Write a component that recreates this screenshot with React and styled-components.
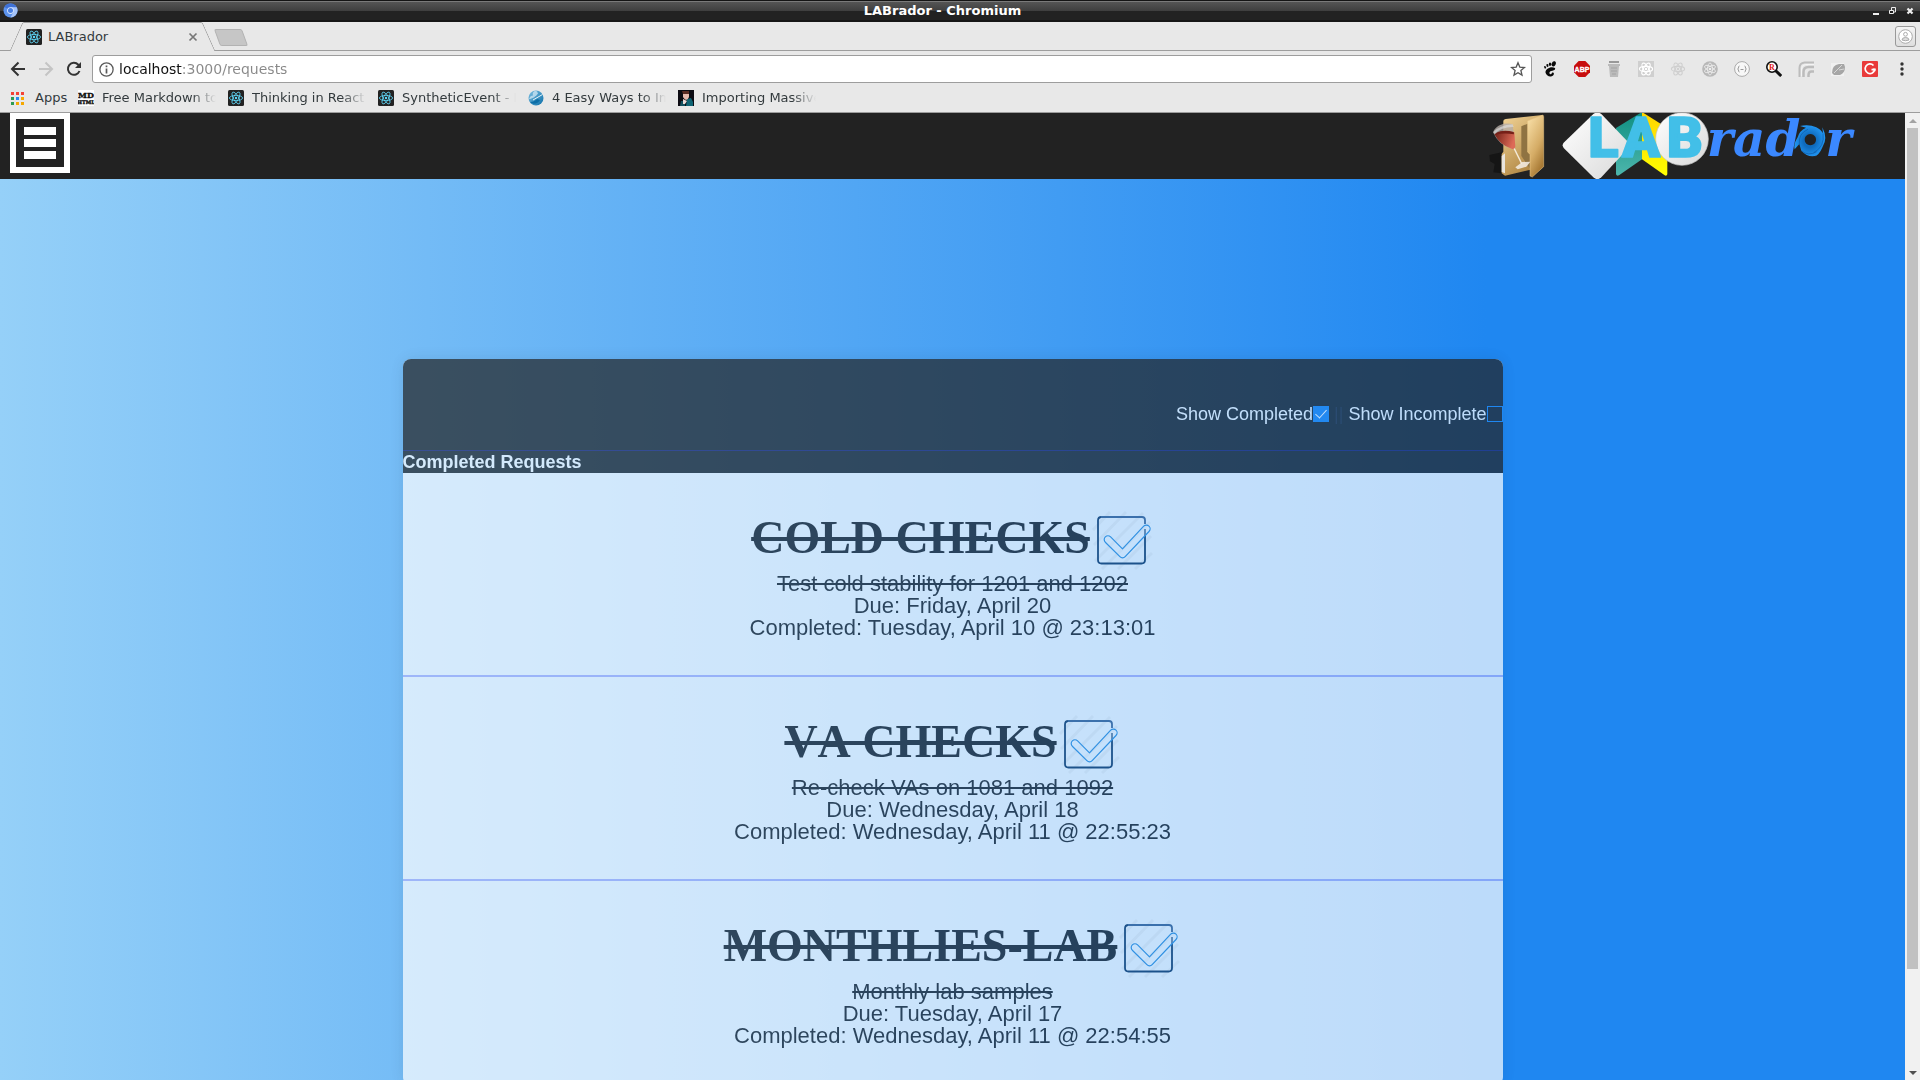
import React, { useState } from "react";
import styled, { createGlobalStyle, css } from "styled-components";

const GlobalStyle = createGlobalStyle`
  * { box-sizing: border-box; }
  body { margin: 0; overflow: hidden; }
  button { padding: 0; border: 0; background: none; font: inherit; color: inherit; cursor: pointer; }
  svg { display: block; flex: none; }
`;

const chromeFont = css`font-family: "DejaVu Sans", Verdana, sans-serif;`;
const pageFont = css`font-family: "Liberation Sans", Arial, sans-serif;`;

/* ---------- browser window ---------- */

const Window = styled.div`
  ${chromeFont}
  height: 100vh;
  display: flex;
  flex-direction: column;
  background: #e8e8e8;
  color: #333a3d;
  font-size: 13px;
`;

const TitleBar = styled.header`
  display: flex;
  align-items: center;
  height: 22px;
  flex: none;
  padding: 0 2px 0 3px;
  border-top: 1px solid #141414;
  border-bottom: 2px solid #161616;
  background: linear-gradient(#7a7a7a 0 1px, #555 1px, #3e3e3e 10px, #222 10px);
  color: #fff;
`;

const WindowTitle = styled.div`
  flex: 1;
  text-align: center;
  font-weight: bold;
  line-height: 18px;
`;

const WindowButton = styled.button`
  width: 17px;
  height: 18px;
  display: grid;
  place-items: center;
`;

const TabStrip = styled.div`
  display: flex;
  align-items: flex-start;
  height: 29px;
  flex: none;
  padding: 0 4px 0 16px;
  box-shadow: inset 0 -1px #9d9d9d;
`;

const Tab = styled.div`
  position: relative;
  z-index: 0;
  width: 193px;
  height: 29px;
  display: flex;
  align-items: center;
  gap: 6px;
  padding: 0 8px 0 10px;
  &::before,
  &::after {
    content: "";
    position: absolute;
    z-index: -1;
    top: 0;
    bottom: 0;
    background: #e8e8e8;
    border-top: 1px solid #9d9d9d;
  }
  &::before {
    left: 0;
    right: 50%;
    border-left: 1px solid #9d9d9d;
    border-top-left-radius: 2px;
    transform: skewX(-24deg);
  }
  &::after {
    right: 0;
    left: 40%;
    border-right: 1px solid #9d9d9d;
    border-top-right-radius: 2px;
    transform: skewX(24deg);
  }
`;

const TabName = styled.span`
  flex: 1;
  line-height: 16px;
`;

const NewTab = styled.button`
  width: 28px;
  height: 17px;
  margin: 7px 0 0 8px;
  background: #c6c6c6;
  border: 1px solid #b2b2b2;
  border-radius: 2px;
  transform: skewX(20deg);
`;

const Profile = styled.button`
  width: 21px;
  height: 21px;
  margin: 4px 0 0 auto;
  display: grid;
  place-items: center;
  border: 1px solid #999;
  border-radius: 3px;
  background: linear-gradient(#f4f4f4, #dedede);
`;

const Toolbar = styled.div`
  display: flex;
  align-items: center;
  flex: none;
  height: 36px;
  padding: 0 2px 0 4px;
`;

const NavButton = styled.button`
  width: 28px;
  height: 28px;
  display: grid;
  place-items: center;
`;

const AddressBar = styled.label`
  flex: 1;
  display: flex;
  align-items: center;
  gap: 5px;
  height: 28px;
  margin: 0 2px 0 4px;
  padding: 0 5px 0 6px;
  border: 1px solid #9d9d9d;
  border-radius: 3px;
  background: #fff;
`;

const Address = styled.input`
  flex: 1;
  min-width: 0;
  height: 24px;
  padding: 0;
  border: 0;
  outline: 0;
  ${chromeFont}
  font-size: 14px;
  color: #888;
  background: linear-gradient(to right, #111 64px, #888 64px);
  -webkit-background-clip: text;
  background-clip: text;
  -webkit-text-fill-color: transparent;
`;

const ExtensionButton = styled.button`
  width: 32px;
  height: 28px;
  display: grid;
  place-items: center;
`;

const BookmarkBar = styled.nav`
  display: flex;
  align-items: center;
  gap: 12px;
  height: 26px;
  flex: none;
  padding: 0 10px 3px 10px;
  border-bottom: 1px solid #9d9d9d;
`;

const Bookmark = styled.a`
  display: flex;
  align-items: center;
  gap: ${(p) => (p.$apps ? "10px" : "8px")};
  width: ${(p) => (p.$apps ? "56px" : "138px")};
  color: inherit;
  text-decoration: none;
`;

const BookmarkName = styled.span`
  flex: 1;
  white-space: nowrap;
  line-height: 18px;
  ${(p) =>
    p.$fade &&
    css`
      overflow: hidden;
      mask-image: linear-gradient(to right, #000 calc(100% - 24px), transparent);
    `}
`;

const Viewport = styled.div`
  flex: 1;
  min-height: 0;
  display: flex;
`;

const ScrollTrack = styled.div`
  width: 15px;
  flex: none;
  display: flex;
  flex-direction: column;
  align-items: center;
  background: #f1f1f1;
`;

const ScrollArrow = styled.button`
  width: 15px;
  height: 15px;
  display: grid;
  place-items: center;
`;

const ScrollSpace = styled.div`
  flex: 1;
  width: 11px;
  display: grid;
  grid-template-rows: 35fr 4fr;
`;

const ScrollThumb = styled.div`
  background: #c1c1c1;
`;

/* ---------- page ---------- */

const Page = styled.div`
  ${pageFont}
  flex: 1;
  min-width: 0;
  overflow: hidden;
  background: linear-gradient(to right, #95d0f8 0%, #1f87f1 78%);
`;

const SiteBar = styled.header`
  display: flex;
  align-items: flex-start;
  height: 66px;
  padding: 0 50px 0 10px;
  background: #222;
`;

const MenuButton = styled.button`
  width: 60px;
  height: 60px;
  display: flex;
  flex-direction: column;
  align-items: center;
  justify-content: center;
  gap: 4px;
  border: 6px solid #fff;
`;

const MenuBar = styled.span`
  width: 32px;
  height: 8px;
  background: #fff;
`;

const Brand = styled.a`
  display: flex;
  gap: 13px;
  margin-left: auto;
`;

const Card = styled.main`
  max-width: 1100px;
  margin: 180px auto 0;
  border-radius: 8px;
  overflow: hidden;
  opacity: 0.7;
  background: #fff;
  color: #1c1c1e;
  box-shadow: 0 0 16px rgba(0, 0, 0, 0.12);
`;

const Filters = styled.div`
  display: flex;
  justify-content: flex-end;
  gap: 5px;
  padding: 44px 0 25px;
  background: #222;
  color: #fff;
  font-size: 18px;
  line-height: 22px;
`;

const FilterLabel = styled.label`
  display: flex;
  align-items: center;
`;

const Separator = styled.span`
  color: #2b303c;
`;

const CheckBox = styled.input`
  appearance: none;
  width: 16px;
  height: 16px;
  margin: 0;
  display: grid;
  place-items: center;
  border: 1px solid #1f87f1;
  &:checked {
    background: #1f87f1;
  }
  &:checked::after {
    content: "";
    width: 5px;
    height: 10px;
    margin-bottom: 3px;
    border: solid #fff;
    border-width: 0 1px 1px 0;
    transform: rotate(42deg);
  }
`;

const SectionTitle = styled.h2`
  margin: 0;
  border-top: 1px solid #21226c;
  background: #222;
  color: #fff;
  font-size: 18px;
  line-height: 22px;
`;

const List = styled.ul`
  margin: 0;
  padding: 0;
  list-style: none;
`;

const Item = styled.li`
  padding: 35px 0 36px;
  border-bottom: 2px solid #b0b4fb;
  text-align: center;
  font-size: 22px;
  line-height: 22px;
`;

const ItemHead = styled.div`
  display: flex;
  align-items: center;
  justify-content: center;
  padding-bottom: 1px;
`;

const ItemTitle = styled.h3`
  margin: 0;
  padding-bottom: 4px;
  font-family: "Liberation Serif", "Times New Roman", serif;
  font-size: 46px;
  line-height: 46px;
  font-kerning: none;
  text-transform: uppercase;
  text-decoration: line-through;
`;

const Line = styled.p`
  margin: 0;
  ${(p) => p.$done && css`text-decoration: line-through;`}
`;

/* ---------- drawings ---------- */

const Atom = ({ color = "#61dafb", bg, size = 16, width = 0.8 }) => (
  <svg width={size} height={size} viewBox="0 0 16 16" fill="none" stroke={color} strokeWidth={width}>
    {bg && <rect width="16" height="16" rx={bg === "#222" ? 1.5 : 0} fill={bg} stroke="none" />}
    <ellipse cx="8" cy="8" rx="6.6" ry="2.6" />
    <ellipse cx="8" cy="8" rx="6.6" ry="2.6" transform="rotate(60 8 8)" />
    <ellipse cx="8" cy="8" rx="6.6" ry="2.6" transform="rotate(120 8 8)" />
    <circle cx="8" cy="8" r="1.2" fill={color} stroke="none" />
  </svg>
);

const ChromiumLogo = () => (
  <svg width="15" height="15" viewBox="0 0 16 16">
    <circle cx="8" cy="8" r="7.5" fill="#5c93ee" />
    <path d="M8 8 1.5 4.2A7.5 7.5 0 0 1 14.5 4.4L8 4.5Z" fill="#3f72d8" />
    <path d="M8 15.5A7.5 7.5 0 0 0 14.6 4.5H8L11.2 9.7Z" fill="#a6c4fa" />
    <circle cx="8" cy="8" r="3.6" fill="#dbe7fd" />
    <circle cx="8" cy="8" r="2.7" fill="#4a80e4" />
  </svg>
);

const MdIcon = () => (
  <svg width="16" height="16" viewBox="0 0 16 16">
    <rect width="16" height="16" fill="#fff" />
    <g fontFamily="DejaVu Serif" fontWeight="bold" textAnchor="middle" fill="#111" stroke="#111" strokeWidth=".4">
      <text x="8" y="8" fontSize="8">MD</text>
      <text x="8" y="14" fontSize="5">HTML</text>
    </g>
  </svg>
);

const AppsIcon = () => (
  <svg width="15" height="15" viewBox="0 0 15 15">
    {["#f44336", "#f44336", "#f44336", "#2e9b51", "#2a8cf0", "#f5a800", "#2e9b51", "#f5a800", "#f5a800"].map((c, i) => (
      <rect key={i} x={1 + (i % 3) * 5} y={1 + Math.floor(i / 3) * 5} width="3" height="3" fill={c} />
    ))}
  </svg>
);

const GlobeIcon = () => (
  <svg width="16" height="16" viewBox="0 0 16 16">
    <defs>
      <linearGradient id="globe" x2="1" y2="1">
        <stop stopColor="#7dbfe2" />
        <stop offset="1" stopColor="#0a6ea8" />
      </linearGradient>
    </defs>
    <circle cx="8" cy="8" r="7.5" fill="url(#globe)" />
    <path d="M1 9C4 9 8 6.500 10 3.500L9 1.500C6 0 4 3 5 5.500C3 5.500 2 6.500 1 9Z" fill="#c9e4f2" opacity=".8" />
    <path d="M5 10 14.500 4.500" stroke="#e6f4fa" />
    <path d="M2 12c3 0 5-1 7-3l3 1c-2 4-7 5-10 2Z" fill="#0c6da6" />
  </svg>
);

const PortraitIcon = () => (
  <svg width="16" height="16" viewBox="0 0 16 16">
    <rect width="16" height="16" fill="#0c0b12" />
    <path d="M8 16 9 9l4-1 2 4v4Z" fill="#0f6474" />
    <path d="M2 16 3 11l4 0 0 5Z" fill="#124f5e" />
    <path d="M5 3q3-3 6 0v4q-1 3-3 3-2-1-3-3Z" fill="#e6b9ad" />
    <path d="M4 1h7v3H5Z" fill="#5b2d25" />
    <path d="M5 9l4 2-2 3-2 0Z" fill="#eadbd8" />
  </svg>
);

const BackIcon = ({ color, flip }) => (
  <svg width="16" height="16" viewBox="0 0 16 16" fill="none" stroke={color} strokeWidth="2" transform={flip ? "scale(-1 1)" : undefined}>
    <path d="M15 8H2.500M8.500 1.500 2 8l6.500 6.500" />
  </svg>
);

const ReloadIcon = () => (
  <svg width="16" height="16" viewBox="0 0 16 16">
    <path d="M13.500 10A6 6 0 1 1 12.300 3.700L14 5.500" fill="none" stroke="#333" strokeWidth="2" />
    <path d="M15 1v6H9Z" fill="#333" />
  </svg>
);

const InfoIcon = () => (
  <svg width="15" height="15" viewBox="0 0 15 15">
    <circle cx="7.500" cy="7.500" r="6.600" fill="none" stroke="#5a5a5a" strokeWidth="1.300" />
    <path d="M7.500 6.500v5M7.500 3.500v1.700" stroke="#5a5a5a" strokeWidth="1.700" />
  </svg>
);

const StarIcon = () => (
  <svg width="16" height="16" viewBox="0 0 16 16">
    <path d="m8 1.800 1.800 4.300 4.700.4-3.600 3 1.100 4.600L8 11.700l-4 2.400 1.100-4.600-3.600-3 4.700-.4Z" fill="none" stroke="#555" strokeWidth="1.300" />
  </svg>
);

const ext = {
  "GNOME Shell": (
    <svg width="16" height="16" viewBox="0 0 16 16" fill="#0a0a0a">
      <ellipse cx="11.700" cy="2.800" rx="2" ry="2.700" transform="rotate(25 11.700 2.800)" />
      <ellipse cx="8" cy="3.300" rx="1.200" ry="1.700" />
      <ellipse cx="5.300" cy="4.500" rx="1" ry="1.500" transform="rotate(-15 5 4)" />
      <ellipse cx="3" cy="6.300" rx=".9" ry="1.300" transform="rotate(-25 3 6)" />
      <path d="M13 7C9 4.500 3 8 3.500 11.500 4 15 9 17 11.500 14c1-1.500 0-3-1.200-2.500-.8.500-.5 2-1.800 1.700-2-.6-1-2.700.7-3.200C11 9.500 14 9 13 7Z" />
    </svg>
  ),
  "Adblock Plus": (
    <svg width="16" height="16" viewBox="0 0 16 16">
      <path d="M4.700 0h6.600L16 4.700v6.600L11.300 16H4.700L0 11.300V4.700Z" fill="#c70d0d" />
      <text x="8" y="10.700" textAnchor="middle" fontFamily="Liberation Sans" fontWeight="bold" fontSize="7" fill="#fff" stroke="#fff" strokeWidth=".3">ABP</text>
    </svg>
  ),
  "HTML cleaner": (
    <svg width="16" height="16" viewBox="0 0 16 16">
      <path d="M3 0h10v2H3Z" fill="#999" />
      <path d="M2 3h12v2h-1l-1 11H4L3 5H2Z" fill="#bbb" />
      <path d="M5 7h6M5 10h6M6 13h4" stroke="#a3a3a3" />
    </svg>
  ),
  "React detector": <Atom color="#fff" bg="#cfcfcf" width={1.2} />,
  "React tools": <Atom color="#cfcfcf" width={1.1} />,
  "Redux tools": (
    <svg width="16" height="16" viewBox="0 0 16 16">
      <circle cx="8" cy="8" r="7.800" fill="#b8b8b8" />
      <g fill="none" stroke="#eee" strokeWidth=".8">
        <ellipse cx="8" cy="8" rx="6" ry="2.500" transform="rotate(90 8 8)" />
        <ellipse cx="8" cy="8" rx="6" ry="2.500" transform="rotate(30 8 8)" />
        <ellipse cx="8" cy="8" rx="6" ry="2.500" transform="rotate(150 8 8)" />
      </g>
      <circle cx="8" cy="8" r="1.300" fill="#eee" />
    </svg>
  ),
  "JSON viewer": (
    <svg width="16" height="16" viewBox="0 0 16 16">
      <circle cx="8" cy="8" r="7.400" fill="#f7f7f7" stroke="#aaa" />
      <path d="M5.500 5Q4.300 5 4.500 7L3.700 8l.8 1q-.2 2 1 2M10.500 5q1.200 0 1 2l.8 1-.8 1q.2 2-1 2M6.500 8.500h3" fill="none" stroke="#999" />
    </svg>
  ),
  "Regex search": (
    <svg width="16" height="16" viewBox="0 0 16 16">
      <circle cx="6" cy="6" r="5.200" fill="#fff" stroke="#111" strokeWidth="1.600" />
      <path d="m9.500 9.500 5.700 5.500" stroke="#111" strokeWidth="3" />
      <text x="6" y="8.800" textAnchor="middle" fontFamily="Liberation Serif" fontWeight="bold" fontSize="8" fill="#e01818">R</text>
    </svg>
  ),
  "RSS reader": (
    <svg width="16" height="16" viewBox="0 0 16 16" fill="none">
      <path d="M1.500 16V7q0-5 5-5.500H16" stroke="#bcbcbc" strokeWidth="2" />
      <path d="M5.500 16V11q0-5 5-5H16" stroke="#bcbcbc" strokeWidth="2.500" />
      <path d="M10.500 16v-2q0-3.500 3-3.500H16" stroke="#bcbcbc" strokeWidth="2.500" />
      <path d="M3.500 15V8q0-4 4-4.500H16" stroke="#f4f4f4" />
    </svg>
  ),
  "Page speed": (
    <svg width="16" height="16" viewBox="0 0 16 16">
      <path d="M1 2h13v13H1Z" fill="#f1f1f1" />
      <path d="M2 12Q2 4 9 3h5l1 3q0 6-5 8H4Z" fill="#a6a6a6" />
      <path d="M4 12 12 4M9 9l5-1" stroke="#d8d8d8" />
    </svg>
  ),
  Grammarly: (
    <svg width="16" height="16" viewBox="0 0 16 16">
      <rect width="16" height="16" rx="1" fill="#e93a3a" />
      <path d="M11.500 4.500A4.800 4.800 0 1 0 12.700 8.600H9.500" fill="none" stroke="#fff" strokeWidth="1.700" />
      <path d="M10.500 7.500h3v3Z" fill="#fff" />
    </svg>
  ),
};

const MoreIcon = () => (
  <svg width="4" height="14" viewBox="0 0 4 14" fill="#333">
    <circle cx="2" cy="2" r="1.700" /><circle cx="2" cy="7" r="1.700" /><circle cx="2" cy="12" r="1.700" />
  </svg>
);

const DoneIcon = () => (
  <svg width="64" height="64" viewBox="0 0 64 64" fill="none">
    <g stroke="#222" strokeOpacity=".05" strokeWidth="3">
      <path d="M3 22 20 4M4 37 36 4M5 53 53 5M12 61 60 14M28 61 61 28M45 61 62 45" />
    </g>
    <path d="M55 21V52q0 3.500-3.500 3.500H11.500Q8 55.500 8 52V12.500Q8 9 11.500 9" stroke="#0f3560" strokeWidth="1.800" />
    <path d="M11 9H52q3 0 3 3v4" stroke="#3b608f" strokeWidth="1.800" />
    <path d="M15.300 34.200a3.700 3.700 0 0 1 5.300-5.300L32.500 40.800 53.700 18.200a3.700 3.700 0 0 1 5.300 5.300L35.200 48.700a3.700 3.700 0 0 1-5.300 0Z" fill="#fff" fillOpacity=".35" stroke="#2d8fdd" strokeWidth="1.200" strokeLinejoin="round" />
  </svg>
);

const WineFolder = () => (
  <svg width="60" height="66" viewBox="21 339 180 198" aria-hidden="true">
    <defs>
      <linearGradient id="fold" x2="0.6" y2="1">
        <stop stopColor="#f3d598" />
        <stop offset="1" stopColor="#ae8440" />
      </linearGradient>
      <linearGradient id="flap" x2="0.5" y2="1">
        <stop stopColor="#fbe3ac" />
        <stop offset=".65" stopColor="#d5ac66" />
        <stop offset="1" stopColor="#a97b36" />
      </linearGradient>
      <linearGradient id="wine" x2="1" y2="0.3">
        <stop stopColor="#6d1d14" />
        <stop offset="1" stopColor="#dd6a57" />
      </linearGradient>
    </defs>
    <path d="M28 465 65 457V520L40 517 44 492 30 484Z" fill="#151515" />
    <path d="M70 363Q70 358 77 357L187 345 189 350V500L75 527 65 520V462L70 455Z" fill="url(#fold)" />
    <path d="M124 379 143 371V458L150 463V506L124 468Z" fill="#8f7342" />
    <path d="M143 363 189 345 191 350V500L157 531 150 528V463L143 456Z" fill="url(#flap)" stroke="#ecc988" strokeWidth="1.500" />
    <path d="M65 468 75 460V520L65 516Z" fill="#e8e4dd" />
    <path d="M101 442 125 491" stroke="#f4ead9" strokeWidth="4" />
    <path d="M106 502 127 486 151 485 139 500 113 508Z" fill="#f4efe6" opacity=".85" />
    <path d="M39 397C50 373 76 367 98 373L106 441Q102 449 95 446Q57 437 39 397Z" fill="#b5aca6" opacity=".8" />
    <path d="M43 402Q65 389 103 397L106 441Q102 449 95 446Q60 436 43 402Z" fill="url(#wine)" />
    <path d="M49 398Q70 388 101 396L102 403Q72 397 47 404Z" fill="#762018" />
    <path d="M40 396Q58 376 98 373L101 381Q65 380 44 402Z" fill="#ddd" opacity=".65" />
  </svg>
);

const LabradorLogo = () => (
  <svg width="295" height="66" viewBox="240 339 885 198" role="img" aria-label="LABrador">
    <defs>
      <linearGradient id="paper" y2="1" x2="1">
        <stop stopColor="#fff" />
        <stop offset="1" stopColor="#d9d9d9" />
      </linearGradient>
      <linearGradient id="teal" x2="0" y2="1">
        <stop stopColor="#0f8f81" />
        <stop offset="1" stopColor="#4db6ac" />
      </linearGradient>
      <linearGradient id="yellow" x2="0" y2="1">
        <stop stopColor="#ffd400" />
        <stop offset="1" stopColor="#ffff00" />
      </linearGradient>
      <radialGradient id="swirl">
        <stop offset=".4" stopColor="#0f6bbd" />
        <stop offset="1" stopColor="#2196f3" />
      </radialGradient>
    </defs>
    <path d="M486 336 408 384V523Q410 529 417 526L486 478Z" fill="url(#teal)" />
    <path d="M486 336 562 384V523Q560 529 554 526L486 478Z" fill="url(#yellow)" />
    <path d="M340 342Q352 333 364 342L442 424Q450 436 442 448L364 532Q352 543 340 532L251 444Q245 436 251 428Z" fill="url(#paper)" />
    <circle cx="606" cy="417" r="79" fill="url(#paper)" stroke="#c4c4c4" strokeWidth="2" />
    <g fill="#42bfe8" stroke="#42bfe8" strokeWidth="5" strokeLinejoin="round" fontFamily="Roboto, sans-serif" fontWeight="900" fontSize="168">
      <text y="471"><tspan x="325">L</tspan><tspan x="426">A</tspan><tspan x="560">B</tspan></text>
    </g>
    <g fill="#3b88ff" fontFamily="DejaVu Serif, serif" fontWeight="bold" fontStyle="italic" fontSize="150">
      <text y="467"><tspan x="680">rad</tspan><tspan x="1036">r</tspan></text>
    </g>
    <path fillRule="evenodd" d="M960 378C985 371 1018 378 1029 400L1027 382Q1044 415 1028 440Q1018 465 1001 471L1012 466Q985 475 964 452L958 432 944 448Q940 432 953 412Q958 392 978 383ZM991 402a17 17 0 1 0 .1 0Z" fill="url(#swirl)" />
    <path d="M958 432Q955 400 984 388M1029 400Q1035 440 1001 458M964 452Q985 470 1010 455" fill="none" stroke="#0e5da8" strokeWidth="3" opacity=".7" />
  </svg>
);

/* ---------- data ---------- */

const bookmarks = [
  { name: "Free Markdown to HTML", icon: <MdIcon /> },
  { name: "Thinking in React -", icon: <Atom bg="#222" /> },
  { name: "SyntheticEvent - React", icon: <Atom bg="#222" /> },
  { name: "4 Easy Ways to Improve", icon: <GlobeIcon /> },
  { name: "Importing Massive", icon: <PortraitIcon /> },
];

const requests = [
  { title: "Cold Checks", text: "Test cold stability for 1201 and 1202", due: "Friday, April 20", completed: "Tuesday, April 10 @ 23:13:01" },
  { title: "VA Checks", text: "Re-check VAs on 1081 and 1092", due: "Wednesday, April 18", completed: "Wednesday, April 11 @ 22:55:23" },
  { title: "Monthlies-Lab", text: "Monthly lab samples", due: "Tuesday, April 17", completed: "Wednesday, April 11 @ 22:54:55" },
];

function Filter({ label, checked, onChange }) {
  return (
    <FilterLabel>
      {label}
      <CheckBox type="checkbox" checked={checked} onChange={(e) => onChange(e.target.checked)} />
    </FilterLabel>
  );
}

function Request({ title, text, due, completed }) {
  return (
    <Item>
      <ItemHead>
        <ItemTitle>{title}</ItemTitle>
        <DoneIcon />
      </ItemHead>
      <Line $done>{text}</Line>
      <Line>Due: {due}</Line>
      <Line>Completed: {completed}</Line>
    </Item>
  );
}

export default function App() {
  const [showCompleted, setShowCompleted] = useState(true);
  const [showIncomplete, setShowIncomplete] = useState(false);
  const [url, setUrl] = useState("localhost:3000/requests");

  return (
    <Window>
      <GlobalStyle />
      <TitleBar>
        <ChromiumLogo />
        <WindowTitle>LABrador - Chromium</WindowTitle>
        <WindowButton aria-label="Minimize">
          <svg width="8" height="8" viewBox="0 0 8 8"><path d="M1 6h6v2H1Z" fill="#eee" /></svg>
        </WindowButton>
        <WindowButton aria-label="Restore">
          <svg width="8" height="8" viewBox="0 0 8 8" fill="none" stroke="#eee"><path d="M.5 3.500h4v3h-4ZM2.500 3V.5h4V5H5" /></svg>
        </WindowButton>
        <WindowButton aria-label="Close">
          <svg width="8" height="8" viewBox="0 0 8 8"><path d="m1.500 1.500 5 5m0-5-5 5" stroke="#eee" strokeWidth="2.200" /></svg>
        </WindowButton>
      </TitleBar>

      <TabStrip>
        <Tab>
          <Atom bg="#222" />
          <TabName>LABrador</TabName>
          <button aria-label="Close tab">
            <svg width="16" height="16" viewBox="0 0 16 16"><path d="m4.500 4.500 7 7m0-7-7 7" stroke="#777" strokeWidth="1.700" /></svg>
          </button>
        </Tab>
        <NewTab aria-label="New tab" />
        <Profile aria-label="Profile">
          <svg width="15" height="15" viewBox="0 0 15 15" fill="#fff" stroke="#aaa">
            <circle cx="7.500" cy="7.500" r="6.800" />
            <circle cx="7.500" cy="5.300" r="1.900" />
            <path d="M4 11q0-2.500 3.500-2.500T11 11Q7.500 12.500 4 11Z" fill="#ddd" />
          </svg>
        </Profile>
      </TabStrip>

      <Toolbar>
        <NavButton aria-label="Back"><BackIcon color="#333" /></NavButton>
        <NavButton aria-label="Forward"><BackIcon color="#c4c4c4" flip /></NavButton>
        <NavButton aria-label="Reload"><ReloadIcon /></NavButton>
        <AddressBar>
          <InfoIcon />
          <Address aria-label="Address" value={url} onChange={(e) => setUrl(e.target.value)} />
          <StarIcon />
        </AddressBar>
        {Object.entries(ext).map(([name, icon]) => (
          <ExtensionButton key={name} aria-label={name}>{icon}</ExtensionButton>
        ))}
        <ExtensionButton aria-label="More"><MoreIcon /></ExtensionButton>
      </Toolbar>

      <BookmarkBar>
        <Bookmark href="#apps" $apps><AppsIcon /><BookmarkName>Apps</BookmarkName></Bookmark>
        {bookmarks.map((b) => (
          <Bookmark key={b.name} href="#bookmark">
            {b.icon}
            <BookmarkName $fade>{b.name}</BookmarkName>
          </Bookmark>
        ))}
      </BookmarkBar>

      <Viewport>
        <Page>
          <SiteBar>
            <MenuButton aria-label="Menu"><MenuBar /><MenuBar /><MenuBar /></MenuButton>
            <Brand href="#home" aria-label="LABrador home"><WineFolder /><LabradorLogo /></Brand>
          </SiteBar>
          <Card>
            <Filters>
              <Filter label="Show Completed" checked={showCompleted} onChange={setShowCompleted} />
              <Separator>||</Separator>
              <Filter label="Show Incomplete" checked={showIncomplete} onChange={setShowIncomplete} />
            </Filters>
            <SectionTitle>Completed Requests</SectionTitle>
            <List>
              {requests.map((r) => <Request key={r.title} {...r} />)}
            </List>
          </Card>
        </Page>
        <ScrollTrack>
          <ScrollArrow aria-label="Scroll up">
            <svg width="8" height="4" viewBox="0 0 8 4"><path d="M0 4 4 0l4 4Z" fill="#a3a3a3" /></svg>
          </ScrollArrow>
          <ScrollSpace><ScrollThumb /></ScrollSpace>
          <ScrollArrow aria-label="Scroll down">
            <svg width="8" height="4" viewBox="0 0 8 4"><path d="M0 0h8L4 4Z" fill="#505050" /></svg>
          </ScrollArrow>
        </ScrollTrack>
      </Viewport>
    </Window>
  );
}
